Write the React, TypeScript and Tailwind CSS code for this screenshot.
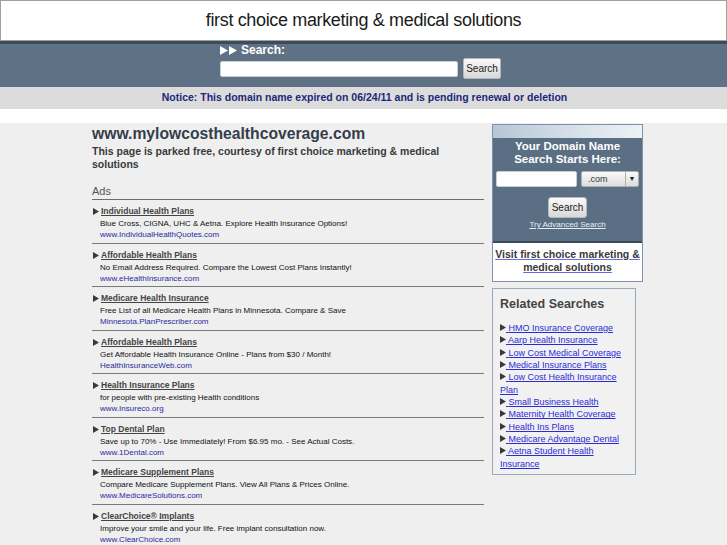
import React from "react";

const ads = [
  { t: "Individual Health Plans", d: "Blue Cross, CIGNA, UHC & Aetna. Explore Health Insurance Options!", u: "www.IndividualHealthQuotes.com" },
  { t: "Affordable Health Plans", d: "No Email Address Required. Compare the Lowest Cost Plans Instantly!", u: "www.eHealthInsurance.com" },
  { t: "Medicare Health Insurance", d: "Free List of all Medicare Health Plans in Minnesota. Compare & Save", u: "Minnesota.PlanPrescriber.com" },
  { t: "Affordable Health Plans", d: "Get Affordable Health Insurance Online - Plans from $30 / Month!", u: "HealthInsuranceWeb.com" },
  { t: "Health Insurance Plans", d: "for people with pre-existing Health conditions", u: "www.Insureco.org" },
  { t: "Top Dental Plan", d: "Save up to 70% - Use Immediately! From $6.95 mo. - See Actual Costs.", u: "www.1Dental.com" },
  { t: "Medicare Supplement Plans", d: "Compare Medicare Supplement Plans. View All Plans & Prices Online.", u: "www.MedicareSolutions.com" },
  { t: "ClearChoice® Implants", d: "Improve your smile and your life. Free implant consultation now.", u: "www.ClearChoice.com" },
];

const related = [
  "HMO Insurance Coverage",
  "Aarp Health Insurance",
  "Low Cost Medical Coverage",
  "Medical Insurance Plans",
  "Low Cost Health Insurance Plan",
  "Small Business Health",
  "Maternity Health Coverage",
  "Health Ins Plans",
  "Medicare Advantage Dental",
  "Aetna Student Health Insurance",
];

function Tri({ className, color = "#3a3a3a", w = 6, h = 7 }: { className?: string; color?: string; w?: number; h?: number }) {
  return (
    <svg width={w} height={h} viewBox={`0 0 ${w} ${h}`} className={className}>
      <path d={`M0 0 L${w} ${h / 2} L0 ${h} Z`} fill={color} />
    </svg>
  );
}

export default function App() {
  return (
    <div className="min-h-[545px] bg-[#efefef] font-['Liberation_Sans',Arial,Helvetica,sans-serif]">
      {/* header */}
      <div className="h-[41px] border border-[#a0a0a0] bg-white flex items-center justify-center">
        <span className="text-[18px] text-[#1a1a1a] tracking-[-0.35px]">first choice marketing &amp; medical solutions</span>
      </div>
      <div className="h-[3px] bg-[#3c4b5a]" />
      {/* search band */}
      <div className="h-[43px] bg-[#5e7185]">
        <div className="ml-[220px] flex flex-col">
          <div className="h-[13px] flex items-center text-white text-[12px] font-bold leading-[13px]">
            <Tri color="#ffffff" w={8} h={9} />
            <Tri color="#ffffff" w={8} h={9} className="ml-[1px]" />
            <span className="ml-[4px]">Search:</span>
          </div>
          <div className="mt-[1px] flex items-center gap-[5px]">
            <div className="w-[238px] h-[16px] bg-white rounded-[2px] border border-[#c8ced4]" />
            <div className="w-[38px] h-[21px] rounded-[2px] border border-[#b4b8bc] bg-gradient-to-b from-[#fafafa] to-[#d8d8d8] flex items-center justify-center text-[10px] text-[#222]">
              Search
            </div>
          </div>
        </div>
      </div>
      {/* notice */}
      <div className="h-[22px] bg-[#dcdcdc] flex items-center justify-center">
        <span className="text-[10.5px] font-bold text-[#1c2778] pl-[2px]">
          Notice: This domain name expired on 06/24/11 and is pending renewal or deletion
        </span>
      </div>
      <div className="h-[14px] bg-white" />
      {/* content */}
      <div className="flex pl-[92px] pt-[1px]">
        {/* left column */}
        <div className="w-[392px]">
          <div className="text-[15.7px] font-bold text-[#343e4a] leading-[20px]">www.mylowcosthealthcoverage.com</div>
          <div className="text-[10.5px] font-bold text-[#3a3a3a] leading-[13px] mt-[1px]">
            This page is parked free, courtesy of first choice marketing &amp; medical solutions
          </div>
          <div className="mt-[14px] text-[11px] text-[#555] leading-[13px] pb-[1px] border-b border-[#6c6c6c]">Ads</div>
          {ads.map((a, i) => (
            <div key={i} className="pt-[5px] pb-[1.5px] border-b border-[#7a7a7a]">
              <div className="h-[13px] flex items-center gap-[1px]">
                <Tri className="ml-[1px]" />
                <span className="ml-[1px] text-[8.5px] font-bold text-[#444] underline">{a.t}</span>
              </div>
              <div className="h-[11px] pl-[8px] text-[8px] text-[#111] leading-[11px]">{a.d}</div>
              <div className="h-[12px] pl-[8px] text-[8px] text-[#2a2aa0] leading-[12px]">{a.u}</div>
            </div>
          ))}
        </div>
        {/* right column */}
        <div className="ml-[8px] w-[151px] flex flex-col">
          <div className="border border-[#7d91a8] bg-white">
            <div className="h-[13px] bg-gradient-to-r from-[#b7c6d5] via-[#d4dee8] to-[#eef2f6]" />
            <div className="bg-[#5b6f84] border-b-2 border-[#3a4a5a] flex flex-col items-center pt-[2px] pb-[11px]">
              <div className="text-[11.5px] font-bold text-white leading-[12.5px] text-center">
                Your Domain Name
                <br />
                Search Starts Here:
              </div>
              <div className="mt-[6px] flex items-center gap-[4px]">
                <div className="w-[81px] h-[16px] bg-white rounded-[2px] border border-[#c8ced4]" />
                <div className="w-[58px] h-[16px] rounded-[2px] border border-[#aab0b6] bg-gradient-to-b from-[#fafafa] to-[#dcdcdc] flex">
                  <span className="flex-1 text-[9px] text-[#333] pl-[6px] leading-[14px]">.com</span>
                  <span className="w-[13px] border-l border-[#b0b0b0] flex items-center justify-center text-[7px] text-[#222]">▼</span>
                </div>
              </div>
              <div className="mt-[10px] w-[39px] h-[21px] rounded-[3px] border border-[#b4b8bc] bg-gradient-to-b from-[#fafafa] to-[#d8d8d8] flex items-center justify-center text-[10px] text-[#222]">
                Search
              </div>
              <div className="mt-[2px] text-[8px] text-[#e8eef4] underline leading-[10px]">Try Advanced Search</div>
            </div>
            <div className="pt-[5px] pb-[7px] text-center text-[10.5px] font-bold text-[#3a3a3a] leading-[13px] whitespace-nowrap">
              <span className="underline decoration-[#6a6ae0]">Visit first choice marketing &amp;</span>
              <br />
              <span className="underline decoration-[#6a6ae0]">medical solutions</span>
            </div>
          </div>
          <div className="mt-[6px] w-[144px] border border-[#9aaabd] bg-[#f1f1f1] pl-[7px] pr-[4px] pt-[7px] pb-[4px]">
            <div className="text-[12.5px] font-bold text-[#454545] leading-[16px]">Related Searches</div>
            <div className="mt-[10px] text-[9px] leading-[12.35px] text-[#2b2bd6]">
              {related.map((r, i) => (
                <div key={i}>
                  <Tri className="inline-block align-[0px]" />
                  <span className="underline"> {r}</span>
                </div>
              ))}
            </div>
          </div>
        </div>
      </div>
    </div>
  );
}
